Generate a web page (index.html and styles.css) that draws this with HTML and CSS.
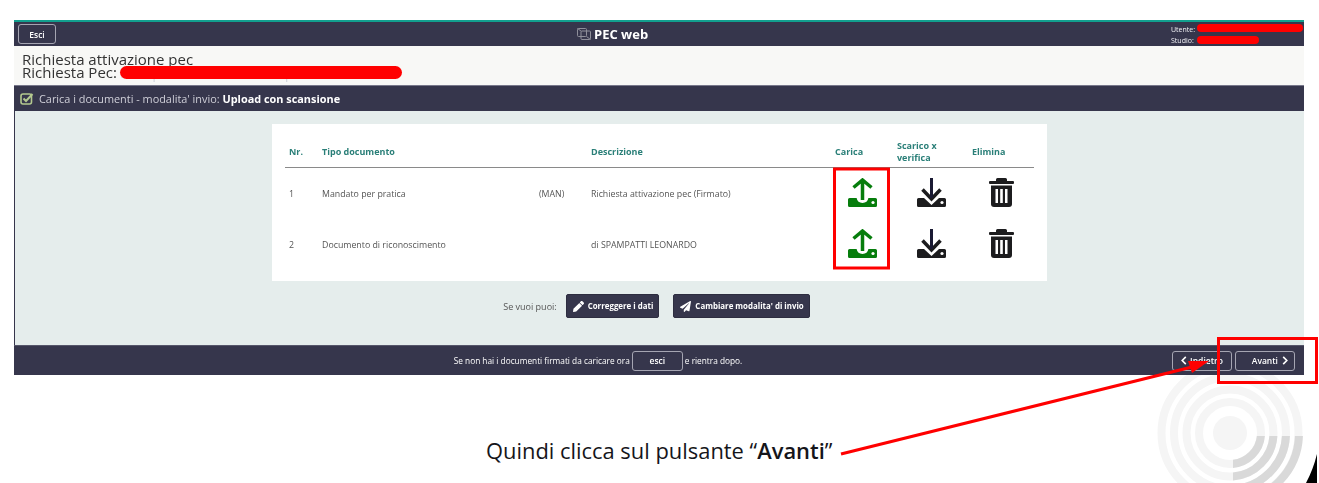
FILE: index.html
```html
<!DOCTYPE html>
<html lang="it">
<head>
<meta charset="utf-8">
<title>PEC web</title>
<link rel="stylesheet" href="styles.css">
</head>
<body>
<svg class="watermark" width="1319" height="483" viewBox="0 0 1319 483" aria-hidden="true">
  <defs><clipPath id="quad"><rect x="1233" y="436" width="71" height="47"/></clipPath></defs>
  <g fill="none" stroke="#f5f5f5">
    <circle cx="1230" cy="433" r="17" fill="#f5f5f5" stroke="none"/>
    <circle cx="1230" cy="433" r="31" stroke-width="8"/>
    <circle cx="1230" cy="433" r="43.5" stroke-width="8"/>
    <circle cx="1230" cy="433" r="56" stroke-width="8"/>
    <circle cx="1230" cy="433" r="68.5" stroke-width="8"/>
  </g>
  <g fill="none" stroke="#d9d9d9" clip-path="url(#quad)">
    <circle cx="1230" cy="433" r="31" stroke-width="8"/>
    <circle cx="1230" cy="433" r="43.5" stroke-width="8"/>
    <circle cx="1230" cy="433" r="56" stroke-width="8"/>
    <circle cx="1230" cy="433" r="69" stroke-width="8"/>
  </g>
  <path d="M1317 454Q1313 470 1306 483H1317Z" fill="#000"/>
</svg>

<main class="page">
  <div class="app">
    <header class="topbar">
      <button class="btn btn-outline btn-exit">Esci</button>
      <div class="brand">
        <svg class="brand-icon" viewBox="0 0 14 12" aria-hidden="true"><g fill="none" stroke="#8f8f9a" stroke-width="1"><rect x=".5" y=".5" width="9" height="8" rx="1"/><rect x="4" y="3" width="9.5" height="8.5" rx="1"/><path d="M.5.5 4 3M9.5 8.5l4 3"/></g></svg>
        <span>PEC web</span>
      </div>
      <div class="userbox">
        <div>Utente:</div>
        <div>Studio:</div>
      </div>
    </header>

    <section class="titlebox">
      <div>Richiesta attivazione pec</div>
      <div>Richiesta Pec: <span class="masked">xxxxpxxx@xxxxxxxxxxxpxxxxx</span></div>
    </section>

    <div class="stepbar">
      <svg class="check" viewBox="0 0 14 13" aria-hidden="true"><rect x="1" y="2" width="10.5" height="10" rx="2" fill="none" stroke="#b4c98f" stroke-width="1.6"/><path d="M3.5 6.5 6 9l6.5-7" fill="none" stroke="#b4c98f" stroke-width="2"/></svg>
      <span>Carica i documenti - modalita' invio: <b>Upload con scansione</b></span>
    </div>

    <section class="content">
      <div class="card">
        <div class="row row-head">
          <div>Nr.</div>
          <div>Tipo documento</div>
          <div></div>
          <div>Descrizione</div>
          <div>Carica</div>
          <div>Scarico x<br>verifica</div>
          <div>Elimina</div>
        </div>
        <div class="row">
          <div>1</div>
          <div>Mandato per pratica</div>
          <div>(MAN)</div>
          <div>Richiesta attivazione pec (Firmato)</div>
          <div class="cell-icon"><svg class="ico ico-up" viewBox="0 0 30 30"><use href="#i-up"/></svg></div>
          <div class="cell-icon"><svg class="ico ico-down" viewBox="0 0 30 30"><use href="#i-down"/></svg></div>
          <div class="cell-icon"><svg class="ico-trash" viewBox="0 0 25 29"><use href="#i-trash"/></svg></div>
        </div>
        <div class="row">
          <div>2</div>
          <div>Documento di riconoscimento</div>
          <div></div>
          <div>di SPAMPATTI LEONARDO</div>
          <div class="cell-icon"><svg class="ico ico-up" viewBox="0 0 30 30"><use href="#i-up"/></svg></div>
          <div class="cell-icon"><svg class="ico ico-down" viewBox="0 0 30 30"><use href="#i-down"/></svg></div>
          <div class="cell-icon"><svg class="ico-trash" viewBox="0 0 25 29"><use href="#i-trash"/></svg></div>
        </div>
      </div>

      <div class="actions">
        <span>Se vuoi puoi:</span>
        <button class="btn btn-solid">
          <svg class="btn-ico" viewBox="0 0 512 512"><path fill="#fff" d="M497.9 142.1l-46.1 46.1c-4.7 4.7-12.3 4.7-17 0l-111-111c-4.7-4.7-4.7-12.3 0-17l46.1-46.1c18.7-18.7 49.1-18.7 67.9 0l60.1 60.1c18.8 18.7 18.8 49.1 0 67.9zM284.2 99.8L21.6 362.4.4 483.9c-2.9 16.4 11.4 30.6 27.8 27.8l121.5-21.3 262.6-262.6c4.7-4.7 4.7-12.3 0-17l-111-111c-4.8-4.7-12.4-4.7-17.1 0z"/></svg>
          Correggere i dati
        </button>
        <button class="btn btn-solid btn-second">
          <svg class="btn-ico" viewBox="0 0 512 512"><path fill="#fff" d="M476 3.2L12.5 270.6c-18.1 10.4-15.8 35.6 2.2 43.2L121 358.4l287.3-253.2c5.5-4.9 13.3 2.6 8.6 8.3L176 407v80.5c0 23.6 28.5 32.9 42.5 15.8L282 426l124.6 52.2c14.2 6 30.4-2.9 33-18.2l72-432C515 7.8 493.3-6.8 476 3.2z"/></svg>
          Cambiare modalita' di invio
        </button>
      </div>
    </section>

    <footer class="footbar">
      <div class="foot-msg">
        <span>Se non hai i documenti firmati da caricare ora</span>
        <button class="btn btn-outline btn-esci">esci</button>
        <span>e rientra dopo.</span>
      </div>
      <div class="foot-nav">
        <button class="btn btn-outline btn-nav">
          <svg class="chev" viewBox="0 0 6 10"><path d="M5 1 1 5l4 4" fill="none" stroke="#fff" stroke-width="1.8"/></svg>Indietro
        </button>
        <button class="btn btn-outline btn-nav btn-next">
          Avanti<svg class="chev" viewBox="0 0 6 10"><path d="m1 1 4 4-4 4" fill="none" stroke="#fff" stroke-width="1.8"/></svg>
        </button>
      </div>
    </footer>
  </div>

  <p class="caption">Quindi clicca sul pulsante “<b>Avanti</b>”</p>
</main>

<svg class="marks" width="1319" height="483" viewBox="0 0 1319 483" aria-hidden="true">
  <rect x="120" y="66" width="282" height="13" rx="6.5" fill="#f00"/>
  <rect x="1197" y="24" width="106" height="8" rx="4" fill="#f00"/>
  <rect x="1197" y="36" width="62" height="8" rx="4" fill="#f00"/>
  <rect x="834.5" y="169" width="54" height="99" fill="none" stroke="#f00" stroke-width="3"/>
  <rect x="1218.5" y="338.5" width="98" height="44" fill="none" stroke="#f00" stroke-width="3"/>
  <path d="M841 454 1192 367" stroke="#f00" stroke-width="3" fill="none"/>
  <path d="M1209 361 1188 361 1192 373Z" fill="#f00"/>
</svg>

<svg class="defs" width="0" height="0" aria-hidden="true">
  <defs>
    <g id="i-up">
      <path d="M1.5 20H8.6A6 6 0 0 0 20.4 20H27.5A1.5 1.5 0 0 1 29 21.5V27.5A1.5 1.5 0 0 1 27.5 29H1.5A1.5 1.5 0 0 1 0 27.5V21.5A1.5 1.5 0 0 1 1.5 20Z" fill="currentColor"/>
      <circle cx="25" cy="24.5" r="1.6" fill="#fff"/>
      <path d="M5.5 9.5 14.5 2l9 7.5M14.5 2V22" fill="none" stroke="currentColor" stroke-width="3.5"/>
    </g>
    <g id="i-down">
      <path d="M1.5 20H7L14.5 27 22 20H27.5A1.5 1.5 0 0 1 29 21.5V27.5A1.5 1.5 0 0 1 27.5 29H1.5A1.5 1.5 0 0 1 0 27.5V21.5A1.5 1.5 0 0 1 1.5 20Z" fill="currentColor"/>
      <circle cx="25" cy="24.5" r="1.6" fill="#fff"/>
      <path d="M5.5 11.5 14.5 21l9-9.5" fill="none" stroke="currentColor" stroke-width="3.5"/>
      <path d="M14.5 0V20" fill="none" stroke="#1a1a33" stroke-width="3"/>
    </g>
    <g id="i-trash">
      <path d="M7 3V1.5A1.5 1.5 0 0 1 8.5 0H16.5A1.5 1.5 0 0 1 18 1.5V3H24A1 1 0 0 1 25 4V5A1 1 0 0 1 24 6H1A1 1 0 0 1 0 5V4A1 1 0 0 1 1 3Z" fill="currentColor"/>
      <path d="M2 7.5H23V26A3 3 0 0 1 20 29H5A3 3 0 0 1 2 26Z" fill="currentColor"/>
      <path d="M6.5 11H9V25H6.5ZM11.2 11H13.8V25H11.2ZM16 11H18.5V25H16Z" fill="#fff"/>
    </g>
  </defs>
</svg>
</body>
</html>
```
FILE: styles.css
```css
* { box-sizing: border-box; }
html, body { margin: 0; padding: 0; }
body {
  position: relative;
  width: 1319px;
  height: 483px;
  overflow: hidden;
  background: #fff;
  font-family: "Open Sans", sans-serif;
  color: #333;
}
.watermark, .marks {
  position: absolute;
  top: 0;
  left: 0;
}
.marks { z-index: 2; }
.defs { position: absolute; }
.page { padding: 20px 15px 0 14px; }

.app {
  filter: blur(.3px);
  border-top: 2px solid #12a08f;
}
.topbar {
  display: flex;
  align-items: center;
  height: 24px;
  padding: 0 0 0 4px;
  background: #36364c;
  color: #fff;
  position: relative;
}
.brand {
  position: absolute;
  left: 563px;
  top: 3px;
  display: flex;
  align-items: center;
  gap: 3px;
  font-size: 13px;
  font-weight: 700;
  line-height: 18px;
}
.brand-icon { width: 14px; height: 12px; }
.userbox {
  margin-left: auto;
  width: 133px;
  font-size: 7px;
  line-height: 11px;
  color: #f0f0f4;
  padding-top: 1px;
}

.btn {
  font-family: inherit;
  color: #fff;
  cursor: pointer;
}
.btn-outline {
  background: #36364c;
  border: 1px solid #a5a5b2;
  border-radius: 3px;
  font-size: 8.5px;
  font-weight: 600;
  padding: 0;
}
.btn-exit { width: 38px; height: 20px; }

.titlebox {
  height: 40px;
  padding: 7px 8px 0;
  background: #f8f8f6;
  font-size: 15px;
  line-height: 13px;
  color: #333;
  border-bottom: 1px solid #77778a;
}
.masked { color: #d5d9df; }

.stepbar {
  display: flex;
  align-items: center;
  gap: 5px;
  height: 25px;
  padding-left: 6px;
  background: #36364c;
  color: #cfcfd8;
  font-size: 10.9px;
}
.stepbar b { color: #fff; font-weight: 700; }
.check { width: 14px; height: 13px; }

.content {
  height: 234px;
  padding-top: 13px;
  background: #e5edec;
  border-left: 1px solid #36364c;
}
.card {
  width: 775px;
  height: 157px;
  margin-left: 257px;
  padding: 13px 13px 0;
  background: #fff;
}
.row {
  display: grid;
  grid-template-columns: 33px 217px 52px 244px 62px 75px 66px;
  align-items: center;
  height: 51px;
  font-size: 8.8px;
  line-height: 12px;
  color: #555;
}
.row > div { padding-left: 4px; }
.row-head {
  height: 31px;
  font-size: 9px;
  font-weight: 700;
  color: #2a7f78;
  border-bottom: 1px solid #8a8a8a;
}
.row-head > div { padding-bottom: 1px; }
.cell-icon { display: flex; margin-bottom: 2px; }
.row > .cell-icon { padding-left: 17px; }
.row > .cell-icon:nth-child(6) { padding-left: 24px; }
.row > .cell-icon:nth-child(7) { padding-left: 21px; }
.ico { width: 30px; height: 30px; }
.ico-up { color: #067d0c; }
.ico-down { color: #1c1c1e; }
.ico-trash { width: 25px; height: 29px; color: #1c1c1e; }

.actions {
  display: flex;
  align-items: center;
  justify-content: center;
  margin: 13px 6px 0 0;
  font-size: 9px;
  color: #555;
}
.btn-solid {
  display: flex;
  align-items: center;
  gap: 4px;
  height: 24px;
  margin-left: 9px;
  padding: 0 5px 0 6px;
  background: #36364c;
  border: 1px solid #2d2d40;
  border-radius: 2px;
  font-size: 7.9px;
  font-weight: 700;
}
.btn-second { margin-left: 14px; }
.btn-ico { width: 11px; height: 11px; }

.footbar {
  display: flex;
  align-items: center;
  height: 30px;
  background: #36364c;
  color: #fff;
  border-top: 1px solid #55566a;
}
.foot-msg {
  flex: 1;
  display: flex;
  align-items: center;
  justify-content: center;
  gap: 2px;
  padding-left: 10px;
  font-size: 8.3px;
}
.btn-esci { width: 51px; height: 20px; }
.foot-nav {
  display: flex;
  gap: 3px;
  padding-right: 9px;
}
.btn-nav {
  display: flex;
  align-items: center;
  justify-content: center;
  gap: 3px;
  width: 60px;
  height: 20px;
}
.btn-next { justify-content: flex-end; gap: 4px; padding-right: 6px; }
.chev { width: 6px; height: 9px; }

.caption {
  margin: 64px 0 0 472px;
  font-size: 21.9px;
  line-height: 24px;
  color: #15151a;
}
.caption b { font-weight: 600; }
```
